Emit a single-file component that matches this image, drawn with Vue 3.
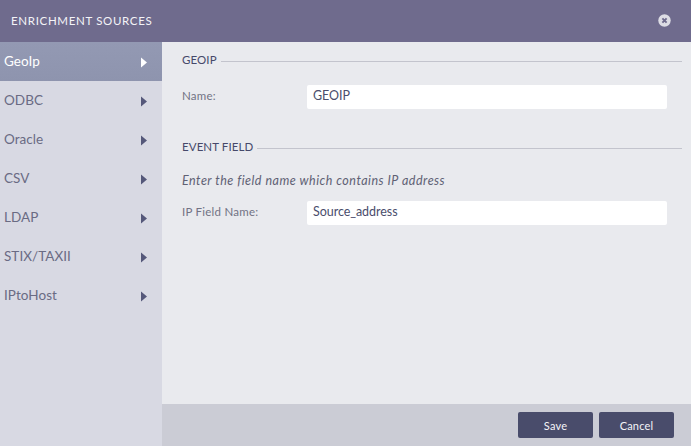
<script setup>
const items = ['GeoIp', 'ODBC', 'Oracle', 'CSV', 'LDAP', 'STIX/TAXII', 'IPtoHost']
</script>

<template>
  <div class="dialog">
    <header class="head">
      <span class="title">ENRICHMENT SOURCES</span>
      <span class="close">
        <svg width="13" height="13" viewBox="0 0 13 13">
          <circle cx="6.5" cy="6.5" r="6.2" fill="#dddde5" />
          <path d="M4.4 4.4l4.2 4.2M8.6 4.4l-4.2 4.2" stroke="#6f6b8d" stroke-width="1.9" />
        </svg>
      </span>
    </header>
    <div class="body">
      <nav class="side">
        <div v-for="(it, i) in items" :key="it" class="item" :class="{ active: i === 0 }">
          <span>{{ it }}</span>
          <svg class="arrow" width="6" height="11" viewBox="0 0 6 11"><path d="M0 0.5l6 5-6 5z" /></svg>
        </div>
      </nav>
      <div class="main">
        <main class="content">
          <section class="sec first">
            <div class="legend"><span>GEOIP</span><i></i></div>
            <div class="row"><label>Name:</label><div class="input">GEOIP</div></div>
          </section>
          <section class="sec second">
            <div class="legend"><span>EVENT FIELD</span><i></i></div>
            <p class="hint">Enter the field name which contains IP address</p>
            <div class="row"><label>IP Field Name:</label><div class="input">Source_address</div></div>
          </section>
        </main>
        <footer class="foot">
          <button>Save</button>
          <button>Cancel</button>
        </footer>
      </div>
    </div>
  </div>
</template>

<style>
html, body { margin: 0; background: #e9eaee; }
</style>

<style scoped>
.dialog { width: 691px; height: 446px; display: flex; flex-direction: column; font-family: Lato, "Open Sans", sans-serif; overflow: hidden; }
.head { height: 42px; flex: none; background: #6f6b8d; display: flex; align-items: center; justify-content: space-between; padding: 0 20px 2px 11px; box-sizing: border-box; }
.title { color: #f4f4f8; font-size: 11.5px; letter-spacing: 0.67px; }
.close { display: flex; }
.body { flex: 1; display: flex; min-height: 0; }
.side { width: 162px; flex: none; background: #d8d9e3; }
.item { height: 39px; box-sizing: border-box; display: flex; align-items: center; justify-content: space-between; padding: 0 15px 0 4px; font-size: 13.5px; color: #6a6b83; letter-spacing: 0.05px; }
.item span { margin-bottom: 2px; }
.item.active { background: linear-gradient(#9399b3, #8e94ae); color: #fff; }
.arrow { fill: #55587a; margin-top: 1px; }
.active .arrow { fill: #fff; }
.main { flex: 1; display: flex; flex-direction: column; min-width: 0; }
.content { flex: 1; background: #e9eaee; padding: 0 9px 0 20px; }
.legend { display: flex; align-items: center; gap: 4px; font-size: 11.5px; color: #46496a; letter-spacing: 0.1px; height: 14px; }
.legend i { flex: 1; height: 1px; background: #c3c4cd; margin-top: 4px; }
.first { padding-top: 10px; }
.second { padding-top: 30px; }
.row { display: flex; align-items: center; height: 24px; }
.first .row { margin-top: 19px; }
.row label { width: 125px; font-size: 11.5px; color: #727384; letter-spacing: 0.25px; padding-bottom: 3px; }
.input { width: 360px; height: 24px; box-sizing: border-box; background: #fff; border-radius: 2px; padding-left: 6px; line-height: 22px; font-size: 12.5px; color: #4a4d6c; letter-spacing: -0.05px; }
.hint { margin: 21px 0 0; font-style: italic; font-size: 12.5px; color: #606174; line-height: 14px; letter-spacing: 0.5px; }
.second .row { margin-top: 13px; }
.foot { height: 42px; flex: none; background: #cbccd5; display: flex; justify-content: flex-end; align-items: center; gap: 6px; padding: 0 17px 0 0; }
.foot button { width: 75px; height: 26px; border: 0; border-radius: 2px; background: #494c6b; color: #f4f4f8; font: 11px Lato, sans-serif; letter-spacing: 0.2px; padding: 0; }
</style>
